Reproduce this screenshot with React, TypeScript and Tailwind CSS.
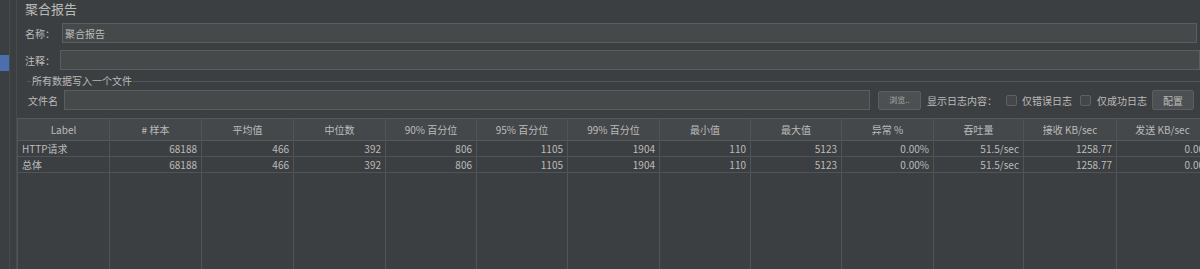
import React from "react";

const cols = [
  { h: "Label", w: "w-[92px]", v: ["HTTP请求", "总体"], left: true },
  { h: "# 样本", w: "w-[92px]", v: ["68188", "68188"] },
  { h: "平均值", w: "w-[92px]", v: ["466", "466"] },
  { h: "中位数", w: "w-[92px]", v: ["392", "392"] },
  { h: "90% 百分位", w: "w-[91px]", v: ["806", "806"] },
  { h: "95% 百分位", w: "w-[91px]", v: ["1105", "1105"] },
  { h: "99% 百分位", w: "w-[92px]", v: ["1904", "1904"] },
  { h: "最小值", w: "w-[91px]", v: ["110", "110"] },
  { h: "最大值", w: "w-[91px]", v: ["5123", "5123"] },
  { h: "异常 %", w: "w-[92px]", v: ["0.00%", "0.00%"] },
  { h: "吞吐量", w: "w-[90px]", v: ["51.5/sec", "51.5/sec"] },
  { h: "接收 KB/sec", w: "w-[93px]", v: ["1258.77", "1258.77"] },
  { h: "发送 KB/sec", w: "w-[92px]", v: ["0.00", "0.00"] },
];

function Checkbox() {
  return <div className="w-[11px] h-[11px] shrink-0 rounded-[2px] border border-[#5d6163] bg-[#43474a]" />;
}

export default function App() {
  return (
    <div
      className="w-[1200px] h-[269px] overflow-hidden bg-[#3c3f41] flex text-[#bbbbbb] text-[10px]"
      style={{ fontFamily: '"Noto Sans CJK SC", "Noto Sans", sans-serif' }}
    >
      <div className="w-[10px] shrink-0 border-r border-[#494c4e]">
        <div className="mt-[55px] h-[16px] w-[9px] bg-[#4b6eaf]" />
      </div>
      <div className="w-[7px] shrink-0 border-r border-[#494c4e]" />
      <div className="flex-1 min-w-0 flex flex-col">
        <div className="h-[19px] pl-2 text-[13px] leading-[17px] text-[#bbbbbb]">聚合报告</div>

        <div className="mt-[4px] h-[20px] flex items-center pl-2 pr-[3px]">
          <div className="w-[37px] shrink-0">名称：</div>
          <div className="flex-1 h-[20px] border border-[#5a5e60] bg-[#45494a] flex items-center pl-[2px]">聚合报告</div>
        </div>

        <div className="mt-[7px] h-[20px] flex items-center pl-2">
          <div className="w-[35px] shrink-0">注释：</div>
          <div className="flex-1 h-[20px] border border-[#5a5e60] bg-[#45494a]" />
        </div>

        <div className="mt-[4px] h-[14px] flex items-center pl-[10px]">
          <div className="w-[4px] h-px bg-[#53575a]" />
          <div className="px-[1px] leading-[14px]">所有数据写入一个文件</div>
          <div className="flex-1 h-px bg-[#53575a]" />
        </div>

        <div className="mt-[2px] h-[20px] flex items-center pl-[11px] pr-[6px]">
          <div className="w-[36px] shrink-0">文件名</div>
          <div className="flex-1 h-[20px] border border-[#5a5e60] bg-[#45494a]" />
          <div className="ml-[8px] w-[43px] h-[19px] shrink-0 rounded-[2px] border border-[#5a5e60] bg-[#4c5052] flex items-center justify-center text-[8px] text-[#a9a9a9]">浏览..</div>
          <div className="ml-[6px] shrink-0">显示日志内容：</div>
          <div className="ml-[9px]"><Checkbox /></div>
          <div className="ml-[5px] shrink-0">仅错误日志</div>
          <div className="ml-[8px]"><Checkbox /></div>
          <div className="ml-[6px] shrink-0">仅成功日志</div>
          <div className="ml-[5px] w-[42px] h-[20px] shrink-0 rounded-[2px] border border-[#5a5e60] bg-[#4c5052] flex items-center justify-center">配置</div>
        </div>

        <div className="mt-[8px] flex-1 flex border-l border-[#505456] min-h-0">
          {cols.map((c, i) => (
            <div key={i} className={`${c.w} shrink-0 flex flex-col border-r border-[#505456]`}>
              <div className="h-[23px] border-t border-b border-[#55595b] bg-[#45484a] flex items-center justify-center whitespace-nowrap">{c.h}</div>
              {c.v.map((v, j) => (
                <div
                  key={j}
                  className={`h-[16px] border-b border-[#505456] flex items-center whitespace-nowrap ${c.left ? "pl-[4px]" : "justify-end pr-[4px]"}`}
                >
                  {v}
                </div>
              ))}
              <div className="flex-1" />
            </div>
          ))}
        </div>
      </div>
    </div>
  );
}
